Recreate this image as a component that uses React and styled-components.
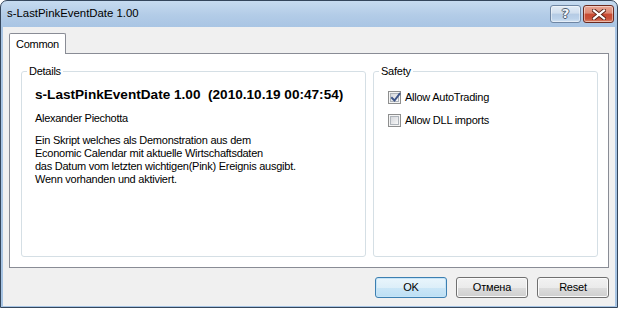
import React from "react";
import styled, { createGlobalStyle } from "styled-components";

const Global = createGlobalStyle`
  html, body { margin: 0; padding: 0; background: #ffffff; }
  body { font-family: "Liberation Sans", Arial, sans-serif; font-size: 11px; color: #000; }
  * { box-sizing: border-box; }
`;

const Window = styled.div`
  width: 618px;
  height: 308px;
  border: 1px solid #34465c;
  border-radius: 7px 7px 0 0;
  background: linear-gradient(#c6dbf0 0px, #b3cce7 14px, #a9c5e4 26px, #a7c4e3 100%);
  padding: 0 2px 1px 2px;
  display: flex;
  flex-direction: column;
  overflow: hidden;
`;

const TitleBar = styled.div`
  height: 26px;
  flex: none;
  display: flex;
  align-items: flex-start;
  justify-content: space-between;
  padding: 4px 1px 0 4px;
`;

const TitleText = styled.div`
  font-family: "Liberation Sans", Arial, sans-serif;
  font-size: 11.4px;
  line-height: 16px;
  color: #000;
  padding-top: 0px;
`;

const CaptionButtons = styled.div`
  display: flex;
  gap: 2px;
`;

const CaptionButton = styled.div`
  width: ${(p) => p.$w}px;
  height: 18px;
  border-radius: 3px;
  border: 1px solid ${(p) => (p.$close ? "#6b2a1f" : "#6f86a3")};
  background: ${(p) =>
    p.$close
      ? "linear-gradient(#e8a594 0%, #dc8a75 45%, #c84a32 50%, #c9523a 80%, #dc8a6e 100%)"
      : "linear-gradient(#e3ecf6 0%, #d0deee 45%, #b5cbe4 50%, #bcd2ea 80%, #d3e3f3 100%)"};
  box-shadow: inset 0 0 0 1px rgba(255, 255, 255, 0.45);
  display: flex;
  align-items: center;
  justify-content: center;
`;

const HelpGlyph = styled.span`
  font-family: "DejaVu Sans", sans-serif;
  font-weight: bold;
  font-size: 13px;
  line-height: 14px;
  color: #f4f6f9;
  text-shadow: -1px 0 #4f5d70, 1px 0 #4f5d70, 0 -1px #4f5d70, 0 1px #4f5d70;
`;

const Client = styled.div`
  flex: 1;
  background: #f0f0f0;
  padding: 6px 6px 8px 6px;
  display: flex;
  flex-direction: column;
`;

const TabStrip = styled.div`
  height: 20px;
  display: flex;
  align-items: flex-end;
  flex: none;
`;

const Tab = styled.div`
  width: 57px;
  height: 21px;
  margin-bottom: -1px;
  position: relative;
  z-index: 1;
  background: #ffffff;
  border: 1px solid #898c95;
  border-bottom: none;
  border-radius: 2px 2px 0 0;
  display: flex;
  align-items: center;
  justify-content: center;
  padding-bottom: 1px;
  letter-spacing: -0.3px;
`;

const Panel = styled.div`
  height: 215px;
  flex: none;
  background: #ffffff;
  border: 1px solid #898c95;
  padding: 11px 10px 10px 11px;
  display: flex;
  gap: 7px;
`;

const Group = styled.fieldset`
  margin: 0;
  padding: 0;
  min-width: 0;
  width: ${(p) => p.$w}px;
  flex: ${(p) => (p.$w ? "none" : "1")};
  border: 1px solid #d5dfe5;
  border-radius: 3px;
`;

const Legend = styled.legend`
  margin-left: 5px;
  padding: 0 2px;
  font-size: 11px;
  line-height: 13px;
  letter-spacing: -0.25px;
  color: #000;
`;

const DetailsBody = styled.div`
  padding: 9px 10px 0 13px;
  display: flex;
  flex-direction: column;
`;

const Heading = styled.div`
  font-weight: bold;
  font-size: 13.6px;
  line-height: 16px;
  white-space: pre;
`;

const Author = styled.div`
  margin-top: 9px;
  line-height: 13px;
  letter-spacing: -0.3px;
`;

const Description = styled.div`
  margin-top: 9px;
  line-height: 13px;
  letter-spacing: -0.25px;
`;

const SafetyBody = styled.div`
  padding: 11px 8px 0 14px;
  display: flex;
  flex-direction: column;
  gap: 7px;
`;

const CheckRow = styled.label`
  display: flex;
  align-items: center;
  height: 16px;
  gap: 4px;
  letter-spacing: -0.25px;
`;

const Box = styled.span`
  width: 13px;
  height: 13px;
  border: 1px solid #8e8f8f;
  background: #f4f4f4;
  padding: 1px;
  display: flex;
  flex: none;
`;

const BoxInner = styled.span`
  flex: 1;
  border: 1px solid #aeb4ba;
  background: linear-gradient(135deg, #d6d8dc 0%, #e9eaec 60%, #f9f9f9 100%);
  display: flex;
  align-items: center;
  justify-content: center;
  position: relative;
`;

const CheckSvg = styled.svg`
  position: absolute;
  left: -2px;
  top: -3px;
`;

const ButtonRow = styled.div`
  margin-top: 9px;
  display: flex;
  justify-content: flex-end;
  gap: 9px;
`;

const Button = styled.div`
  width: 72px;
  height: 21px;
  border-radius: 3px;
  border: 1px solid ${(p) => (p.$default ? "#3c7fb1" : "#707070")};
  background: ${(p) =>
    p.$default
      ? "linear-gradient(#e9f5fc 0%, #ddeff9 50%, #cbe6f7 51%, #bcdff4 100%)"
      : "linear-gradient(#f2f2f2 0%, #ebebeb 50%, #dddddd 51%, #cfcfcf 100%)"};
  box-shadow: inset 0 0 0 1px ${(p) => (p.$default ? "#c6e4f7" : "#fbfbfb")};
  display: flex;
  align-items: center;
  justify-content: center;
  letter-spacing: -0.2px;
  padding-bottom: 1px;
`;

function Checkbox({ checked, label }) {
  return (
    <CheckRow>
      <Box>
        <BoxInner>
          {checked && (
            <CheckSvg width="13" height="13" viewBox="0 0 13 13">
              <path
                d="M3 7 L5.5 9.5 L10.5 3"
                fill="none"
                stroke="#3f5689"
                strokeWidth="2"
                strokeLinecap="square"
              />
            </CheckSvg>
          )}
        </BoxInner>
      </Box>
      <span>{label}</span>
    </CheckRow>
  );
}

export default function App() {
  return (
    <>
      <Global />
      <Window>
        <TitleBar>
          <TitleText>s-LastPinkEventDate 1.00</TitleText>
          <CaptionButtons>
            <CaptionButton $w={31}>
              <HelpGlyph>?</HelpGlyph>
            </CaptionButton>
            <CaptionButton $w={31} $close>
              <svg width="14" height="11" viewBox="0 0 14 11">
                <path
                  d="M2 1.5 L12 9.5 M12 1.5 L2 9.5"
                  stroke="#5a2418"
                  strokeWidth="4"
                  strokeLinecap="square"
                />
                <path
                  d="M2 1.5 L12 9.5 M12 1.5 L2 9.5"
                  stroke="#ffffff"
                  strokeWidth="2.2"
                  strokeLinecap="square"
                />
              </svg>
            </CaptionButton>
          </CaptionButtons>
        </TitleBar>
        <Client>
          <TabStrip>
            <Tab>Common</Tab>
          </TabStrip>
          <Panel>
            <Group $w={345}>
              <Legend>Details</Legend>
              <DetailsBody>
                <Heading>s-LastPinkEventDate 1.00  (2010.10.19 00:47:54)</Heading>
                <Author>Alexander Piechotta</Author>
                <Description>
                  Ein Skript welches als Demonstration aus dem
                  <br />
                  Economic Calendar mit aktuelle Wirtschaftsdaten
                  <br />
                  das Datum vom letzten wichtigen(Pink) Ereignis ausgibt.
                  <br />
                  Wenn vorhanden und aktiviert.
                </Description>
              </DetailsBody>
            </Group>
            <Group>
              <Legend>Safety</Legend>
              <SafetyBody>
                <Checkbox checked label="Allow AutoTrading" />
                <Checkbox label="Allow DLL imports" />
              </SafetyBody>
            </Group>
          </Panel>
          <ButtonRow>
            <Button $default>OK</Button>
            <Button>Отмена</Button>
            <Button>Reset</Button>
          </ButtonRow>
        </Client>
      </Window>
    </>
  );
}
